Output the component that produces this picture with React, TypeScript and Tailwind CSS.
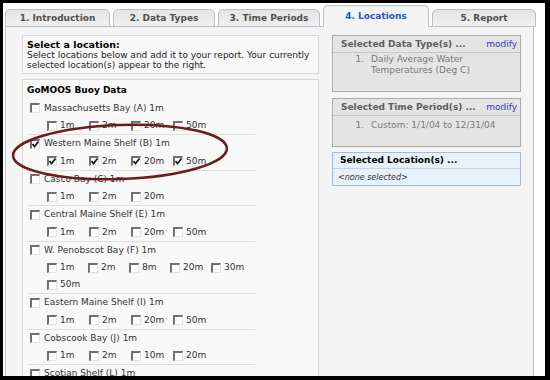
import type React from "react"

interface Buoy {
  name: string
  depths: string[][]
  checked?: boolean
}

const buoys: Buoy[] = [
  { name: "Massachusetts Bay (A) 1m", depths: [["1m", "2m", "20m", "50m"]] },
  { name: "Western Maine Shelf (B) 1m", depths: [["1m", "2m", "20m", "50m"]], checked: true },
  { name: "Casco Bay (C) 1m", depths: [["1m", "2m", "20m"]] },
  { name: "Central Maine Shelf (E) 1m", depths: [["1m", "2m", "20m", "50m"]] },
  { name: "W. Penobscot Bay (F) 1m", depths: [["1m", "2m", "8m", "20m", "30m"], ["50m"]] },
  { name: "Eastern Maine Shelf (I) 1m", depths: [["1m", "2m", "20m", "50m"]] },
  { name: "Cobscook Bay (J) 1m", depths: [["1m", "2m", "10m", "20m"]] },
  { name: "Scotian Shelf (L) 1m", depths: [] },
]

const tabs = ["1. Introduction", "2. Data Types", "3. Time Periods", "4. Locations", "5. Report"]
const tabWidths = ["w-[105px]", "w-[102px]", "w-[102px]", "w-[106px]", "w-[104px]"]

export default function App() {
  return (
    <div className="relative w-[550px] h-[380px] bg-black pt-[3px] pl-[3px] pr-[5px] pb-[4px] font-['DejaVu_Sans',Verdana,sans-serif] text-[9px] leading-[11px]">
      <div className="w-full h-full bg-white overflow-hidden">
        <div className="relative z-10 flex items-end gap-[3px] ml-[2px] pt-[2px] h-[24px] -mb-px">
          {tabs.map((t, i) => (
            <Tab key={t} label={t} active={i === 3} width={tabWidths[i]} />
          ))}
        </div>

        <div className="ml-[2px] w-[529px] h-[400px] bg-[#f4f4f4] border border-[#b7c0c8] pt-[8px] pl-[16px] flex gap-[13px]">
          <div className="w-[297px] flex flex-col gap-[5px]">
            <div className="h-[39px] bg-[#f8f8f8] border border-[#d8d8d8] px-[4px] pt-[3px] text-[#222]">
              <div className="font-bold text-[9.5px] leading-[11px] text-black">Select a location:</div>
              <div className="leading-[10px]">
                Select locations below and add it to your report. Your currently selected location(s) appear to the right.
              </div>
            </div>

            <div className="flex-1 bg-[#f8f8f8] border border-[#d8d8d8] pl-[4px] pt-[5px]">
              <div className="font-bold text-black text-[9px]">GoMOOS Buoy Data</div>
              <div className="w-[228px] mt-[3.5px] text-[#333]">
                {buoys.map((b) => (
                  <BuoyRow key={b.name} buoy={b} />
                ))}
              </div>
            </div>
          </div>

          <div className="w-[189px] flex flex-col">
            <SideBox title="Selected Data Type(s) ..." bodyHeight="h-[38px]">
              <ListItem n="1." text={["Daily Average Water", "Temperatures (Deg C)"]} />
            </SideBox>
            <div className="h-[6px]" />
            <SideBox title="Selected Time Period(s) ..." bodyHeight="h-[30px]">
              <div className="pt-[3px]">
                <ListItem n="1." text={["Custom: 1/1/04 to 12/31/04"]} />
              </div>
            </SideBox>
            <div className="h-[5px]" />
            <div className="border border-[#a3bbd6] bg-[#e8f0f9]">
              <div className="h-[16px] flex items-center px-[7px] font-bold text-black border-b border-[#c3d3e6]">
                Selected Location(s) ...
              </div>
              <div className="h-[16px] flex items-center px-[5px] italic text-[8px] text-[#333]">&lt;none selected&gt;</div>
            </div>
          </div>
        </div>
      </div>

      <svg className="absolute left-0 top-0 pointer-events-none" width="550" height="380">
        <ellipse
          cx="120"
          cy="152"
          rx="107"
          ry="27"
          transform="rotate(-2 120 152)"
          fill="none"
          stroke="#6a1c20"
          strokeWidth="2.5"
        />
      </svg>
    </div>
  )
}

function Tab({ label, active, width }: { label: string; active: boolean; width: string }) {
  return (
    <div
      className={`${width} flex justify-center rounded-t-[5px] border border-[#b7c0c8] font-bold ${
        active
          ? "h-[22px] bg-[#f4f4f4] border-b-[#f4f4f4] text-[#2652c8] items-start pt-[5px]"
          : "h-[18px] bg-gradient-to-b from-[#e4e4e4] to-[#f0f0f0] text-[#505050] items-center"
      }`}
    >
      {label}
    </div>
  )
}

function Check({ checked }: { checked?: boolean }) {
  return (
    <span className="relative inline-block w-[10px] h-[10px] shrink-0 bg-white border-t-2 border-l-2 border-t-[#707070] border-l-[#707070] border-r border-b border-r-[#e2e2e2] border-b-[#e2e2e2]">
      {checked && (
        <svg className="absolute -left-[1px] -top-[1px]" width="9" height="9" viewBox="0 0 9 9">
          <path d="M1.5 4 L3.5 6.5 L7.5 1.5" fill="none" stroke="#1a1a1a" strokeWidth="1.8" />
        </svg>
      )}
    </span>
  )
}

function BuoyRow({ buoy }: { buoy: Buoy }) {
  return (
    <div className="border-b border-[#dedede] px-[3px]">
      <div className="h-[17.5px] flex items-center gap-[4px]">
        <Check checked={buoy.checked} />
        <span>{buoy.name}</span>
      </div>
      {buoy.depths.map((row, i) => (
        <div key={i} className="h-[17px] flex items-center pl-[17px]">
          {row.map((d) => (
            <span key={d} className="w-[42px] flex items-center gap-[3px]">
              <Check checked={buoy.checked} />
              <span>{d}</span>
            </span>
          ))}
        </div>
      ))}
    </div>
  )
}

function SideBox({ title, bodyHeight, children }: { title: string; bodyHeight: string; children: React.ReactNode }) {
  return (
    <div className="border border-[#ababab] bg-[#e4e4e4]">
      <div className="h-[17px] flex items-center justify-between px-[8px] pr-[3px] border-b border-[#c8c8c8]">
        <span className="font-bold text-[#5e5e5e]">{title}</span>
        <span className="text-[#3535c8]">modify</span>
      </div>
      <div className={`${bodyHeight} pt-[1px]`}>{children}</div>
    </div>
  )
}

function ListItem({ n, text }: { n: string; text: string[] }) {
  return (
    <div className="flex text-[#7a7a7a]">
      <span className="w-[38px] text-right pr-[7px]">{n}</span>
      <div>
        {text.map((t) => (
          <div key={t}>{t}</div>
        ))}
      </div>
    </div>
  )
}
